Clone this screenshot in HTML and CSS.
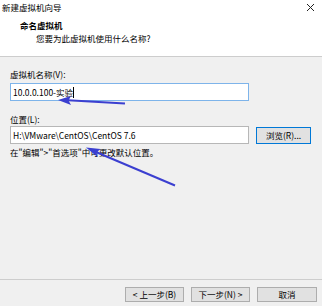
FILE: index.html
```html
<!DOCTYPE html>
<html lang="zh-CN">
<head>
    <meta charset="UTF-8">
    <title>新建虚拟机向导</title>
    <link rel="stylesheet" href="styles.css">
</head>
<body>
    <div class="header">
        <div class="titlebar">
            <span>新建虚拟机向导</span>
            <svg class="close" width="9" height="9" viewBox="0 0 9 9">
                <path d="M1 1 L8 8 M8 1 L1 8" stroke="#222" stroke-width="1"/>
            </svg>
        </div>
        <h1>命名虚拟机</h1>
        <p class="subtitle">您要为此虚拟机使用什么名称?</p>
    </div>

    <div class="content">
        <label class="label">虚拟机名称(V):</label>
        <div class="field focused">10.0.0.100-实验<span class="caret"></span></div>

        <label class="label second">位置(L):</label>
        <div class="row">
            <div class="field">H:\VMware\CentOS\CentOS 7.6</div>
            <button class="btn browse">浏览(R)...</button>
        </div>
        <p class="hint">在"编辑"&gt;"首选项"中可更改默认位置。</p>
    </div>

    <div class="footer">
        <button class="btn">&lt; 上一步(B)</button>
        <button class="btn">下一步(N) &gt;</button>
        <button class="btn wide">取消</button>
    </div>

    <!-- annotation arrows drawn over the dialog -->
    <svg class="arrows" width="322" height="306" viewBox="0 0 322 306">
        <path d="M125 103.5 L68 100.3" stroke="#3b3fd0" stroke-width="2" fill="none"/>
        <polygon points="58,100 71,96 68.5,100.4 71,105" fill="#3b3fd0"/>
        <path d="M175 185.5 L96 152" stroke="#3b3fd0" stroke-width="2" fill="none"/>
        <polygon points="86,147.5 100.5,149 96.5,152.5 97.5,157" fill="#3b3fd0"/>
    </svg>
</body>
</html>
```

FILE: styles.css
```css
body {
    margin: 0;
    width: 322px;
    height: 306px;
    background-color: #f0f0f0;
    font-family: "Noto Sans CJK SC", "Liberation Sans", sans-serif;
    font-size: 8.5px;
    color: #000;
    position: relative;
    overflow: hidden;
    display: flex;
    flex-direction: column;
}

.header {
    background-color: #fff;
    height: 56px;
    border-bottom: 1px solid #cdcdcd;
    flex-shrink: 0;
}

.titlebar {
    height: 14px;
    line-height: 14px;
    padding-left: 2px;
    display: flex;
    justify-content: space-between;
    align-items: center;
}

.close {
    margin-right: 7px;
}

h1 {
    margin: 5px 0 0 20px;
    font-size: 8.5px;
    font-weight: bold;
    line-height: 13px;
}

.subtitle {
    margin: 0 0 0 36px;
    line-height: 13px;
}

.content {
    flex: 1;
    padding: 11px 0 0 10px;
}

.label {
    display: block;
    line-height: 12px;
}

.label.second {
    margin-top: 12px;
}

.field {
    box-sizing: border-box;
    width: 239px;
    height: 18px;
    line-height: 16px;
    padding-left: 2px;
    margin-top: 3px;
    background-color: #fff;
    border: 1px solid #b7b7b7;
    white-space: nowrap;
}

.field.focused {
    border-color: #7eb4ea;
}

.caret {
    display: inline-block;
    width: 0;
    height: 11px;
    border-left: 1px solid #000;
    vertical-align: -2px;
}

.row {
    display: flex;
    align-items: center;
    gap: 7px;
    margin-top: 1px;
}

.row .field {
    margin-top: 0;
}

.btn {
    box-sizing: border-box;
    width: 59px;
    height: 15px;
    padding: 0;
    font-family: inherit;
    font-size: 8.5px;
    line-height: 13px;
    color: #000;
    background-color: #e1e1e1;
    border: 1px solid #adadad;
}

.btn.browse {
    width: 55px;
    height: 17px;
    border-color: #0078d7;
}

.btn.wide {
    width: 60px;
}

.hint {
    margin: 2px 0 0;
    line-height: 12px;
}

.footer {
    height: 27px;
    border-top: 1px solid #cdcdcd;
    display: flex;
    justify-content: flex-end;
    gap: 7px;
    padding: 7px 5px 0 0;
    box-sizing: border-box;
    flex-shrink: 0;
}

.arrows {
    position: absolute;
    top: 0;
    left: 0;
    pointer-events: none;
}
```
